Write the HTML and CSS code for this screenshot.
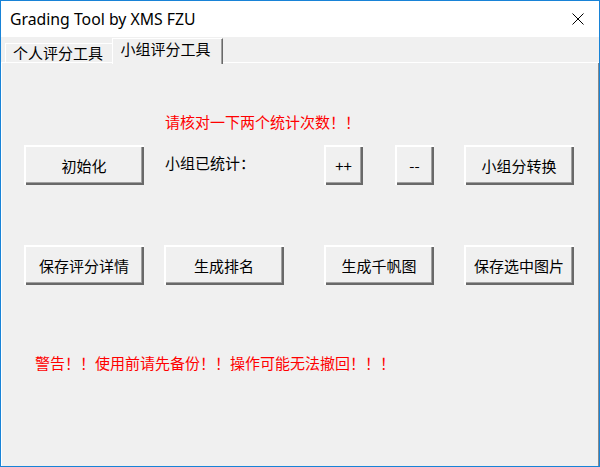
FILE: index.html
```html
<!DOCTYPE html>
<html lang="zh-CN">
<head>
<meta charset="UTF-8" />
<title>Grading Tool by XMS FZU</title>
<link rel="stylesheet" href="styles.css">
</head>
<body>
<div class="window">
  <div class="titlebar">
    <span class="title">Grading Tool by XMS FZU</span>
    <svg class="close" width="12" height="12" viewBox="0 0 12 12">
      <path d="M0.5 0.5 L11.5 11.5 M11.5 0.5 L0.5 11.5" stroke="#000" stroke-width="1" fill="none" />
    </svg>
  </div>

  <div class="tabs">
    <span class="tab-gap"></span>
    <div class="tab">个人评分工具</div>
    <div class="tab active">小组评分工具</div>
    <span class="tab-fill"></span>
  </div>

  <div class="panel">
    <p class="notice">请核对一下两个统计次数！！</p>

    <div class="row first">
      <button class="btn">初始化</button>
      <span class="label">小组已统计：</span>
      <div class="pair">
        <button class="btn small">++</button>
        <button class="btn small">--</button>
      </div>
      <button class="btn narrow">小组分转换</button>
    </div>

    <div class="row second">
      <button class="btn">保存评分详情</button>
      <button class="btn">生成排名</button>
      <button class="btn narrow">生成千帆图</button>
      <button class="btn narrow">保存选中图片</button>
    </div>

    <p class="warning">警告！！使用前请先备份！！操作可能无法撤回！！！</p>
  </div>
</div>
</body>
</html>
```

FILE: styles.css
```css
* {
  box-sizing: border-box;
}
body {
  margin: 0;
  font-family: "Noto Sans CJK SC", "Noto Sans", sans-serif;
  font-size: 15px;
  color: #000;
}
.window {
  width: 600px;
  height: 467px;
  border: 1px solid #1883d7;
  background: #f0f0f0;
  display: flex;
  flex-direction: column;
}
.titlebar {
  height: 36px;
  background: #fff;
  display: flex;
  align-items: center;
  justify-content: space-between;
  padding: 0 15px 0 9px;
}
.title {
  font-family: "Noto Sans", sans-serif;
  font-size: 15.8px;
  line-height: 20px;
}
.close {
  display: block;
}

/* tab strip */
.tabs {
  height: 26px;
  display: flex;
  align-items: flex-end;
}
.tab-gap {
  width: 4px;
  height: 1px;
  background: #fff;
}
.tab-fill {
  flex: 1;
  height: 1px;
  background: #fff;
}
.tab {
  width: 107px;
  height: 20px;
  border-top: 1px solid #fff;
  border-left: 1px solid #fff;
  border-bottom: 1px solid #fff;
  line-height: 18px;
  text-align: center;
  padding-right: 2px;
}
.tab.active {
  width: 111px;
  height: 26px;
  margin-bottom: -1px;
  border-bottom: none;
  border-right: 1px solid #696969;
  box-shadow: inset -1px 0 #a0a0a0;
  line-height: 20px;
  padding-right: 4px;
}

/* panel */
.panel {
  flex: 1;
  border-left: 1px solid #fff;
  border-right: 1px solid #8a8a8a;
  padding-left: 22px;
}
.notice {
  margin: 49px 0 0 141px;
  line-height: 20px;
  color: #f00;
}
.row {
  display: grid;
  grid-template-columns: 140px 160px 140px 110px;
  height: 40px;
}
.row.first {
  margin-top: 13px;
}
.row.second {
  margin-top: 60px;
}
.label {
  line-height: 20px;
  padding: 8px 0 0 1px;
}
.pair {
  width: 110px;
  display: flex;
  justify-content: space-between;
}
.btn {
  width: 120px;
  height: 40px;
  padding: 0;
  border: none;
  background: #f0f0f0;
  font-family: inherit;
  font-size: 15px;
  color: #000;
  box-shadow: inset 2px 2px #fff, inset -2px -2px #696969, inset -3px -3px #a0a0a0;
}
.btn.narrow {
  width: 110px;
}
.btn.small {
  width: 39px;
}
.warning {
  margin: 68px 0 0 11px;
  line-height: 20px;
  color: #f00;
}
```
